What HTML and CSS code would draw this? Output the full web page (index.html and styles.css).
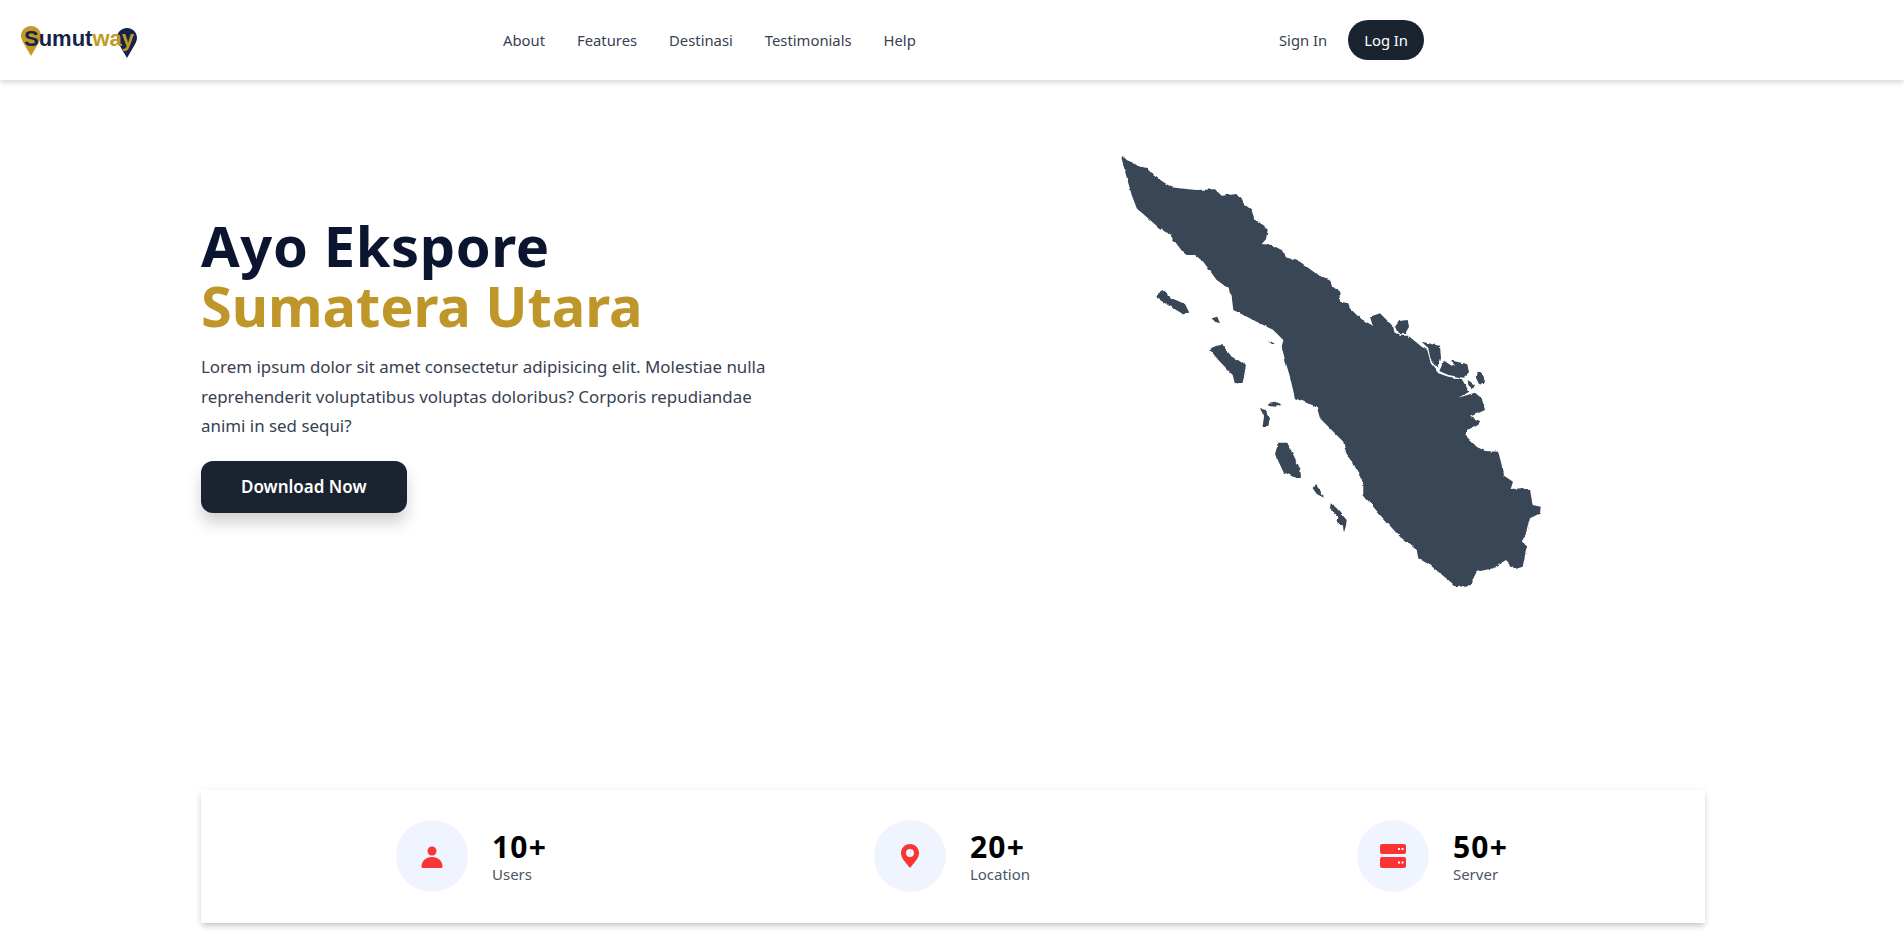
FILE: index.html
```html
<!DOCTYPE html>
<html lang="id">
<head>
    <meta charset="UTF-8">
    <meta name="viewport" content="width=device-width, initial-scale=1.0">
    <title>Sumutway</title>
    <link rel="stylesheet" href="styles.css">
</head>
<body>
    <header class="navbar">
        <a class="logo" href="#">
            <svg class="logo-pin logo-pin-gold" viewBox="0 0 20 30"><path d="M10 0C4.500 0 0 4.400 0 9.800 0 13 1.500 15.500 3 18l7 12 7-12c1.500-2.500 3-5 3-8.200C20 4.400 15.500 0 10 0z"/></svg>
            <svg class="logo-pin logo-pin-navy" viewBox="0 0 20 30"><path d="M10 0C4.500 0 0 4.400 0 9.800 0 13 1.500 15.500 3 18l7 12 7-12c1.500-2.500 3-5 3-8.200C20 4.400 15.500 0 10 0z"/></svg>
            <span class="logo-text">Sumut<span class="logo-way">way</span></span>
        </a>
        <nav class="nav-links">
            <a href="#">About</a>
            <a href="#">Features</a>
            <a href="#">Destinasi</a>
            <a href="#">Testimonials</a>
            <a href="#">Help</a>
        </nav>
        <div class="nav-auth">
            <a href="#">Sign In</a>
            <a class="btn-login" href="#">Log In</a>
        </div>
    </header>

    <section class="hero">
        <div class="hero-text">
            <h1><span class="title-dark">Ayo Ekspore</span> <span class="title-gold">Sumatera Utara</span></h1>
            <p>Lorem ipsum dolor sit amet consectetur adipisicing elit. Molestiae nulla reprehenderit voluptatibus voluptas doloribus? Corporis repudiandae animi in sed sequi?</p>
            <a class="btn-download" href="#">Download Now</a>
        </div>
        <svg class="map" viewBox="1100 140 460 460" role="img" aria-label="Peta Sumatera">
            <defs>
                <filter id="coast" x="-5%" y="-5%" width="110%" height="110%" color-interpolation-filters="sRGB">
                    <feTurbulence type="fractalNoise" baseFrequency="0.16" numOctaves="2" seed="4"/>
                    <feDisplacementMap in="SourceGraphic" scale="3" xChannelSelector="R" yChannelSelector="G"/>
                </filter>
            </defs>
            <g filter="url(#coast)">
                <!-- daratan -->
                <path d="M1122.700 155.700L1126.700 160 1133 162.700 1138 166 1146.700 168 1153 175 1163 181.700 1171.700 187.300 1183 188.700 1196.700 190 1215 189.300 1221.700 195.700 1236.700 194 1241.700 198.300 1244 204 1251.700 210 1254.300 220 1265 226 1267.700 230 1266 239.300 1261.700 244 1271.700 245 1281.700 250 1286 257.300 1300 261.700 1316.700 274 1330 280 1331.700 285.700 1339.300 291.700 1340 301.700 1348.300 303.300 1350 308.300 1360 318.300 1371.700 325 1373.300 327.700 1370 316.700 1380 313.300 1390 323.300 1393.300 326.700 1394.300 332.300 1400 335.700 1408.300 335.700 1421.700 346.700 1427.300 350 1430.700 363.300 1438.300 373.300 1448.300 376.700 1461.700 379 1469.300 391.700 1458.300 397.700 1475 392.700 1481.700 398.300 1485 410 1470 416.700 1480 421 1478.300 425 1466.700 430 1465 435 1476.700 446.700 1485 451 1498.300 451.700 1501.700 465 1503 475 1513 481.700 1510.700 489 1521.700 488.300 1530 490 1532.700 505 1540.700 506.700 1540 513.300 1530 518.300 1525 536.700 1521.700 540 1526.700 546.700 1522.700 566.700 1515 569.300 1506 560 1493.300 568.300 1476.700 571.700 1470 585 1456.700 587.300 1448.300 580 1430 565 1418.300 558.300 1416.700 550 1400 536.700 1381.700 516.700 1363.300 495 1363.300 483.300 1353.300 463.300 1346.700 455 1343.300 441.700 1320 418.300 1316.700 406.700 1295 398.300 1290 376.700 1285 360 1281.700 346.700 1283.300 340 1273.300 330 1256.700 321.700 1240 313.300 1233.300 310 1231.700 296.700 1228.300 288.300 1216.700 280 1203.300 261.700 1195 255 1185 255 1170 235 1158.300 227.300 1136.700 208.300 1131.700 195 1126 175 1121.500 158z"/>
                <!-- pulau timur -->
                <path d="M1395 326.700L1399.300 321 1407.700 320 1409 326.700 1405 334 1398.300 334z"/>
                <path d="M1421.700 341.700L1440 345.700 1441 358.300 1438.300 367.700 1430.700 360 1428.300 348.300z"/>
                <path d="M1444 360.700L1451.700 365.700 1455 364.300 1450.700 360.300 1467.300 364.300 1469 372.300 1463.300 377.700 1448.300 375 1439.300 371z"/>
                <path d="M1467.700 380L1475 385 1472.700 389.300 1468.300 385z"/>
                <ellipse cx="1480" cy="377.700" rx="3.800" ry="6" transform="rotate(-18 1480 377.700)"/>
                <!-- pulau barat -->
                <path d="M1158.300 293.300L1163.300 290.700 1171.700 298.300 1185 304 1189.300 312.700 1181.700 313.300 1165 303.300 1157.300 298.300z"/>
                <path d="M1211.700 318.300L1217.300 316.700 1220 323.300 1215 321.700z"/>
                <path d="M1268.300 340L1275 344 1271.700 344z"/>
                <path d="M1209.300 349.300L1221.700 344 1231.700 356.700 1243.300 362.700 1245.700 366.700 1242.700 382.700 1235 384 1232.700 375 1220 361.700z"/>
                <path d="M1268.300 402.700L1275 401.700 1281.700 405 1275 406.700 1268.300 405.700z"/>
                <path d="M1260 407.700L1265 410 1270 418.300 1268.300 426 1262.700 426 1264 416.700z"/>
                <path d="M1278.300 442.700L1287.300 442.700 1300 468.300 1301 476.700 1295 477.700 1283.300 471.700 1275 454z"/>
                <path d="M1315 484L1320 490 1324 497.700 1316.700 494 1312.700 488.300z"/>
                <path d="M1330.700 503.300L1336.700 508.300 1346.700 520 1345.700 526.700 1344 532.300 1342.700 526 1337.300 523.300 1338.300 516.700 1330 508.300z"/>
            </g>
        </svg>
    </section>

    <section class="stats">
        <div class="stat">
            <div class="stat-icon">
                <svg viewBox="0 0 24 24"><circle cx="12" cy="7" r="4.500"/><path d="M1.500 22.500C1.500 17 6 13 12 13s10.500 4 10.500 9.500c0 1-1 1.500-2 1.500H3.500c-1 0-2-.5-2-1.500z"/></svg>
            </div>
            <div class="stat-text">
                <strong>10+</strong>
                <span>Users</span>
            </div>
        </div>
        <div class="stat">
            <div class="stat-icon">
                <svg viewBox="0 0 24 24"><path fill-rule="evenodd" d="M12 0C6.700 0 3 4 3 9c0 2.500 1 4.500 2.300 6.700L12 24l6.700-8.300C20 13.500 21 11.500 21 9c0-5-3.700-9-9-9zm0 5a4 4 0 1 1 0 8 4 4 0 0 1 0-8z"/></svg>
            </div>
            <div class="stat-text">
                <strong>20+</strong>
                <span>Location</span>
            </div>
        </div>
        <div class="stat">
            <div class="stat-icon">
                <svg viewBox="0 0 26 24"><path fill-rule="evenodd" d="M2 0h22a2 2 0 0 1 2 2v6a2 2 0 0 1-2 2H2a2 2 0 0 1-2-2V2a2 2 0 0 1 2-2zm16 4v2h2V4zm3.500 0v2h2V4zM2 13h22a2 2 0 0 1 2 2v7a2 2 0 0 1-2 2H2a2 2 0 0 1-2-2v-7a2 2 0 0 1 2-2zm16 4.500v2h2v-2zm3.500 0v2h2v-2z"/></svg>
            </div>
            <div class="stat-text">
                <strong>50+</strong>
                <span>Server</span>
            </div>
        </div>
    </section>
</body>
</html>
```

FILE: styles.css
```css
* {
    box-sizing: border-box;
}

body {
    margin: 0;
    padding-bottom: 11px;
    background-color: #FFFFFF;
    color: #374151;
    font-family: "Noto Sans", "Open Sans", sans-serif;
}

a {
    color: inherit;
    text-decoration: none;
}

.navbar {
    display: flex;
    align-items: center;
    justify-content: space-between;
    height: 80px;
    padding: 0 480px 0 20px;
    background-color: #FFFFFF;
    box-shadow: 0 2px 6px rgba(0, 0, 0, 0.18);
}

.logo {
    position: relative;
    display: block;
    width: 118px;
    height: 40px;
    margin-right: 365px;
}

.logo-pin {
    position: absolute;
    top: 6px;
    width: 20px;
    height: 30px;
}

.logo-pin-gold {
    left: 1px;
    fill: #C39A26;
}

.logo-pin-navy {
    left: 97px;
    top: 8px;
    fill: #14234A;
}

.logo-text {
    position: absolute;
    left: 4px;
    top: 5px;
    font-family: "Liberation Sans", Arial, sans-serif;
    font-size: 22px;
    font-weight: bold;
    line-height: 28px;
    color: #14234A;
}

.logo-way {
    color: #C39A26;
}

.nav-links {
    display: flex;
    gap: 32px;
    font-size: 14.8px;
    margin-right: auto;
}

.nav-auth {
    display: flex;
    align-items: center;
    gap: 21px;
    font-size: 14.8px;
}

.btn-login {
    display: flex;
    align-items: center;
    height: 40px;
    padding: 0 16px;
    border-radius: 20px;
    background-color: #1A2330;
    color: #FFFFFF;
}

.hero {
    display: grid;
    grid-template-columns: 899px 460px;
    height: 710px;
    padding: 60px 200px 0 201px;
}

.hero-text {
    padding-top: 75px;
}

.hero-text h1 {
    margin: 0;
    font-size: 56px;
    line-height: 60px;
    font-weight: 700;
}

.title-dark {
    display: block;
    color: #0B1530;
    letter-spacing: 0.6px;
}

.title-gold {
    display: block;
    color: #BF962A;
    letter-spacing: -0.1px;
}

.hero-text p {
    width: 580px;
    margin: 17px 0 20px;
    font-size: 16.9px;
    line-height: 29.6px;
}

.btn-download {
    display: inline-block;
    padding: 13px 40px;
    border-radius: 12px;
    background-color: #1A2330;
    color: #FFFFFF;
    font-size: 17px;
    line-height: 26px;
    font-weight: 600;
    box-shadow: 0 10px 15px rgba(0, 0, 0, 0.18);
}

.map {
    width: 460px;
    height: 460px;
    fill: #384656;
}

.stats {
    display: flex;
    justify-content: space-between;
    height: 133px;
    margin: 0 199px 0 201px;
    padding: 30px 197px 0 195px;
    background-color: #FFFFFF;
    box-shadow: 0 4px 6px -1px rgba(0, 0, 0, 0.2), 0 0 8px rgba(0, 0, 0, 0.05);
}

.stat {
    display: flex;
    gap: 24px;
    height: 72px;
    align-items: center;
}

.stat-icon {
    display: flex;
    align-items: center;
    justify-content: center;
    width: 72px;
    height: 72px;
    border-radius: 50%;
    background-color: #F0F4FE;
}

.stat-icon svg {
    width: 26px;
    height: 24px;
    fill: #F73535;
}

.stat-text {
    margin-top: 3px;
}

.stat-text strong {
    display: block;
    font-size: 30px;
    line-height: 33px;
    letter-spacing: 1.2px;
    color: #000000;
}

.stat-text span {
    display: block;
    font-size: 15px;
    line-height: 22px;
    color: #4B5563;
}
```
